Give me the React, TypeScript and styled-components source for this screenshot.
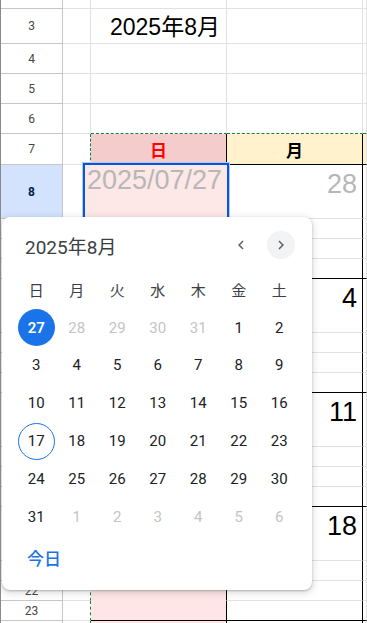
import React from "react";
import styled, { createGlobalStyle } from "styled-components";

const GlobalStyle = createGlobalStyle`
  html, body { margin: 0; padding: 0; background: #fff; overflow: hidden; }
  body { font-family: Arial, "Liberation Sans", "Noto Sans CJK JP", sans-serif; }
`;

const COLS = "62px 28px 136px 136px 1fr";
const GRID = "1px solid #e2e2e2";
const HEAD_LINE = "1px solid #c4c7c5";
const BLACK = "1px solid #000";
const DASH = "1px dashed #188038";
const PINK = "#ffe6e6";

const Page = styled.div`
  position: relative;
  width: 367px;
  height: 623px;
  overflow: hidden;
  box-sizing: border-box;
  border-left: 1px solid #8a8a8a;
`;

const Sheet = styled.div`
  display: flex;
  flex-direction: column;
`;

const SheetRow = styled.div<{ $h: number }>`
  display: grid;
  grid-template-columns: ${COLS};
  height: ${(p) => p.$h}px;
  flex: none;
`;

const RowHeader = styled.div<{ $active?: boolean }>`
  box-sizing: border-box;
  display: flex;
  align-items: center;
  justify-content: center;
  background: ${(p) => (p.$active ? "#d3e3fd" : "#fff")};
  border-right: ${HEAD_LINE};
  border-bottom: ${HEAD_LINE};
  font-family: Roboto, Arial, sans-serif;
  font-size: 12px;
  font-weight: ${(p) => (p.$active ? 700 : 400)};
  color: ${(p) => (p.$active ? "#041e49" : "#444746")};
  overflow: hidden;
`;

const Cell = styled.div<{ $bg?: string; $right?: string; $bottom?: string }>`
  box-sizing: border-box;
  position: relative;
  min-width: 0;
  background: ${(p) => p.$bg ?? "#fff"};
  border-right: ${(p) => p.$right ?? GRID};
  border-bottom: ${(p) => p.$bottom ?? GRID};
`;

const MonthTitle = styled.div`
  position: absolute;
  left: 19px;
  bottom: 4px;
  white-space: nowrap;
  font-size: 23px;
  line-height: 23px;
  color: #000;
`;

const WeekHead = styled.div<{ $color: string }>`
  height: 100%;
  display: flex;
  align-items: center;
  justify-content: center;
  font-family: "Noto Sans CJK JP", sans-serif;
  font-weight: 700;
  font-size: 17px;
  color: ${(p) => p.$color};
`;

const DateNum = styled.div<{ $muted?: boolean }>`
  text-align: right;
  padding: 5.5px 5px 0 0;
  font-family: "Liberation Sans", Arial, sans-serif;
  font-size: 27px;
  line-height: 27px;
  color: ${(p) => (p.$muted ? "#b7b7b7" : "#000")};
`;

const Editor = styled.div`
  position: absolute;
  left: 82px;
  top: 163px;
  width: 146px;
  height: 60px;
  box-sizing: border-box;
  background: #fde7e7;
  border: 2px solid #0b57d0;
  outline: 1px solid #a8c7fa;
  padding: 1.5px 0 0 2px;
  font-family: "Liberation Sans", Arial, sans-serif;
  font-size: 27px;
  line-height: 27px;
  color: #b7b7b7;
  white-space: nowrap;
`;

const Popup = styled.div`
  position: absolute;
  left: 1px;
  top: 217px;
  width: 310px;
  box-sizing: border-box;
  padding: 14px 12px 15px 14px;
  background: #fff;
  border-radius: 8px;
  box-shadow: 0 1px 2px rgba(60, 64, 67, 0.3), 0 2px 6px 2px rgba(60, 64, 67, 0.15);
  font-family: Roboto, "Noto Sans CJK JP", sans-serif;
  display: flex;
  flex-direction: column;
`;

const PopHeader = styled.div`
  display: flex;
  align-items: center;
  height: 28px;
  padding: 0 5px 0 9px;
  margin-bottom: 12px;
`;

const PopTitle = styled.div`
  flex: 1;
  font-size: 19px;
  font-weight: 400;
  color: #3c4043;
`;

const NavButton = styled.button<{ $hover?: boolean }>`
  width: 28px;
  height: 28px;
  margin-left: 12px;
  padding: 0;
  border: none;
  border-radius: 50%;
  background: ${(p) => (p.$hover ? "#f1f3f4" : "transparent")};
  display: flex;
  align-items: center;
  justify-content: center;
`;

const DayGrid = styled.div`
  display: grid;
  grid-template-columns: repeat(7, 40.5px);
  grid-auto-rows: 37.8px;
`;

const Weekday = styled.div`
  display: flex;
  align-items: center;
  justify-content: center;
  font-family: "Noto Sans CJK JP", sans-serif;
  font-size: 15px;
  color: #3c4043;
`;

const Day = styled.div`
  display: flex;
  align-items: center;
  justify-content: center;
`;

const DayCircle = styled.span<{ $muted?: boolean; $selected?: boolean; $today?: boolean }>`
  box-sizing: border-box;
  width: 37px;
  height: 37px;
  border-radius: 50%;
  display: flex;
  align-items: center;
  justify-content: center;
  font-size: 15px;
  font-weight: ${(p) => (p.$selected ? 600 : 400)};
  color: ${(p) => (p.$selected ? "#fff" : p.$muted ? "#c4c4c4" : "#202124")};
  background: ${(p) => (p.$selected ? "#1a73e8" : "transparent")};
  border: ${(p) => (p.$today ? "1px solid #1a73e8" : "none")};
`;

const TodayButton = styled.button`
  align-self: flex-start;
  height: 36px;
  margin-top: 3.5px;
  padding: 0 11px;
  border: none;
  border-radius: 4px;
  background: none;
  font-family: "Noto Sans CJK JP", sans-serif;
  font-size: 17px;
  font-weight: 500;
  color: #1a73e8;
`;

const Chevron = ({ dir }: { dir: "left" | "right" }) => (
  <svg width="18" height="18" viewBox="0 0 24 24">
    <path
      d={dir === "left" ? "M15.41 7.41L14 6l-6 6 6 6 1.41-1.41L10.83 12z" : "M8.59 16.59L10 18l6-6-6-6-1.41 1.41L13.17 12z"}
      fill="#5f6368"
    />
  </svg>
);

type RowDef = { n: number; h: number };
const rows: RowDef[] = [
  { n: 2, h: 9 },
  { n: 3, h: 35 },
  { n: 4, h: 30 },
  { n: 5, h: 30 },
  { n: 6, h: 30 },
  { n: 7, h: 31 },
];
for (let w = 0; w < 4; w++) {
  const base = 8 + w * 4;
  rows.push({ n: base, h: 54 });
  rows.push({ n: base + 1, h: 20 });
  rows.push({ n: base + 2, h: 20 });
  rows.push({ n: base + 3, h: 20 });
}
rows.push({ n: 24, h: 54 });

const cDates: Record<number, { t: string; muted?: boolean }> = {
  8: { t: "28", muted: true },
  12: { t: "4" },
  16: { t: "11" },
  20: { t: "18" },
};

const weekEnd = (n: number) => n >= 8 && (n - 8) % 4 === 3;
const labelShown = (n: number) => n > 2 && n < 24;

function SheetRowView({ n, h }: RowDef) {
  const aRight = n >= 7 ? DASH : GRID;
  let bBg = "#fff", bRight = GRID, bBottom = GRID;
  let cBg = "#fff", cRight = GRID, cBottom = GRID;
  let dBg = "#fff", dBottom = GRID;
  if (n === 6) {
    bBottom = DASH;
    cBottom = DASH;
    dBottom = DASH;
  } else if (n === 7) {
    bBg = "#f4cccc";
    bRight = BLACK;
    bBottom = BLACK;
    cBg = "#fff2cc";
    cRight = BLACK;
    cBottom = BLACK;
    dBg = "#fff2cc";
    dBottom = BLACK;
  } else if (n >= 8) {
    bBg = PINK;
    bRight = BLACK;
    bBottom = weekEnd(n) ? BLACK : `1px solid ${PINK}`;
    cRight = BLACK;
    cBottom = weekEnd(n) ? BLACK : GRID;
    dBottom = weekEnd(n) ? BLACK : GRID;
  }
  const d = cDates[n];
  return (
    <SheetRow $h={h}>
      <RowHeader $active={n === 8}>{labelShown(n) ? n : ""}</RowHeader>
      <Cell $right={aRight} />
      <Cell $bg={bBg} $right={bRight} $bottom={bBottom}>
        {n === 3 && <MonthTitle>2025年8月</MonthTitle>}
        {n === 7 && <WeekHead $color="#ff0000">日</WeekHead>}
      </Cell>
      <Cell $bg={cBg} $right={cRight} $bottom={cBottom}>
        {n === 7 && <WeekHead $color="#000">月</WeekHead>}
        {d && <DateNum $muted={d.muted}>{d.t}</DateNum>}
      </Cell>
      <Cell $bg={dBg} $bottom={dBottom} />
    </SheetRow>
  );
}

const weekdays = ["日", "月", "火", "水", "木", "金", "土"];
type DayDef = { d: number; muted?: boolean; selected?: boolean; today?: boolean };
const days: DayDef[] = [
  { d: 27, selected: true },
  { d: 28, muted: true },
  { d: 29, muted: true },
  { d: 30, muted: true },
  { d: 31, muted: true },
];
for (let i = 1; i <= 31; i++) days.push({ d: i, today: i === 17 });
for (let i = 1; i <= 6; i++) days.push({ d: i, muted: true });

export default function App() {
  return (
    <>
      <GlobalStyle />
      <Page>
        <Sheet>
          {rows.map((r) => (
            <SheetRowView key={r.n} {...r} />
          ))}
        </Sheet>
        <Editor>2025/07/27</Editor>
        <Popup>
          <PopHeader>
            <PopTitle>2025年8月</PopTitle>
            <NavButton aria-label="前月">
              <Chevron dir="left" />
            </NavButton>
            <NavButton $hover aria-label="翌月">
              <Chevron dir="right" />
            </NavButton>
          </PopHeader>
          <DayGrid>
            {weekdays.map((w) => (
              <Weekday key={w}>{w}</Weekday>
            ))}
            {days.map((x, i) => (
              <Day key={i}>
                <DayCircle $muted={x.muted} $selected={x.selected} $today={x.today}>
                  {x.d}
                </DayCircle>
              </Day>
            ))}
          </DayGrid>
          <TodayButton>今日</TodayButton>
        </Popup>
      </Page>
    </>
  );
}
